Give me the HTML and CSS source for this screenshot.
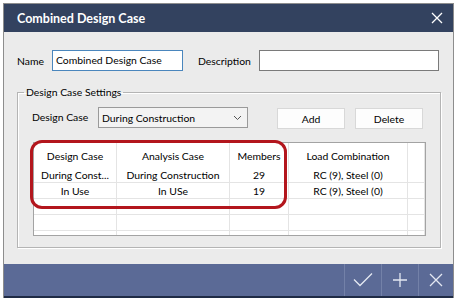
FILE: index.html
```html
<!DOCTYPE html>
<html>
<head>
<meta charset="utf-8">
<link rel="stylesheet" href="styles.css">
</head>
<body>
<div class="stage">
  <div class="window">
    <div class="titlebar">
      <span class="title">Combined Design Case</span>
      <svg class="close" width="12" height="12" viewBox="0 0 12 12"><path d="M1 1L11 11M11 1L1 11" stroke="#ffffff" stroke-width="1.3" fill="none"/></svg>
    </div>
    <div class="content">
      <div class="row-top">
        <label class="lbl-name">Name</label>
        <div class="input input-name">Combined Design Case</div>
        <label class="lbl-desc">Description</label>
        <div class="input input-desc"></div>
      </div>
      <fieldset class="group">
        <legend>Design Case Settings</legend>
        <div class="row-case">
          <label class="lbl-case">Design Case</label>
          <div class="select">
            <span>During Construction</span>
            <svg width="9" height="6" viewBox="0 0 9 6"><path d="M1 1L4.5 4.5L8 1" stroke="#555" stroke-width="1" fill="none"/></svg>
          </div>
          <button class="btn btn-add">Add</button>
          <button class="btn btn-del">Delete</button>
        </div>
        <div class="table-wrap">
          <div class="grid">
            <div class="h">Design Case</div>
            <div class="h">Analysis Case</div>
            <div class="h">Members</div>
            <div class="h">Load Combination</div>
            <div class="h"></div>

            <div class="c">During Const...</div>
            <div class="c">During Construction</div>
            <div class="c">29</div>
            <div class="c">RC (9), Steel (0)</div>
            <div class="c"></div>

            <div class="c">In Use</div>
            <div class="c">In USe</div>
            <div class="c">19</div>
            <div class="c">RC (9), Steel (0)</div>
            <div class="c"></div>

            <div class="c"></div><div class="c"></div><div class="c"></div><div class="c"></div><div class="c"></div>
            <div class="c"></div><div class="c"></div><div class="c"></div><div class="c"></div><div class="c"></div>
            <div class="c"></div><div class="c"></div><div class="c"></div><div class="c"></div><div class="c"></div>
          </div>
          <div class="highlight"></div>
        </div>
      </fieldset>
    </div>
    <div class="footer">
      <div class="fbtn"><svg width="20" height="14" viewBox="0 0 20 14"><path d="M1 6.5L7 12.5L19 0.5" stroke="#e4e8f2" stroke-width="1.3" fill="none"/></svg></div>
      <div class="fbtn"><svg width="16" height="16" viewBox="0 0 16 16"><path d="M8 1V15M1 8H15" stroke="#e4e8f2" stroke-width="1.3" fill="none"/></svg></div>
      <div class="fbtn last"><svg width="14" height="14" viewBox="0 0 14 14"><path d="M1 1L13 13M13 1L1 13" stroke="#e4e8f2" stroke-width="1.3" fill="none"/></svg></div>
    </div>
    <div class="under"></div>
  </div>
</div>
</body>
</html>
```

FILE: styles.css
```css
* { box-sizing: border-box; }
html, body { margin: 0; padding: 0; background: #ffffff; }
body {
  font-family: Lato, "Liberation Sans", sans-serif;
  font-size: 10.4px;
  color: #000;
}
.stage { padding: 3px 0 0 3px; width: 460px; height: 305px; overflow: hidden; }
.window {
  width: 451px;
  border: 1px solid #8d8d8d;
  border-bottom: none;
  background: #ebebeb;
}
.titlebar {
  height: 28px;
  background: #33425f;
  display: flex;
  align-items: center;
  justify-content: space-between;
  padding: 0 10px 0 13px;
}
.title { color: #fff; font-weight: bold; font-size: 12.5px; }
.close { display: block; }
.content {
  height: 232px;
  padding: 18px 0 0 13px;
  background: #ebebeb;
}
.row-top { display: flex; align-items: center; height: 21px; }
.lbl-name { width: 35px; }
.input {
  height: 21px;
  background: #fff;
  border: 1px solid #7a7a7a;
  padding: 0 3px;
  line-height: 19px;
  white-space: nowrap;
}
.input-name { width: 131px; border-color: #4a86bd; }
.lbl-desc { margin-left: 15px; width: 61px; }
.input-desc { width: 180px; }

.group {
  margin: 14px 0 0 0;
  width: 424px;
  border: 1px solid #b4b4b4;
  box-shadow: inset 1px 1px 0 #fff, 1px 1px 0 #fff;
  padding: 8px 0 11px 14px;
}
.group legend {
  padding: 0 2px;
  margin-left: -8px;
  line-height: 14px;
}
.row-case { display: flex; align-items: flex-start; height: 21px; }
.lbl-case { width: 66px; line-height: 21px; }
.select {
  width: 150px;
  height: 21px;
  border: 1px solid #9a9a9a;
  background: #f3f3f3;
  display: flex;
  align-items: center;
  justify-content: space-between;
  padding: 0 5px 0 3px;
}
.btn {
  font: inherit;
  color: #000;
  height: 21px;
  width: 68px;
  margin-top: 1px;
  background: #fdfdfd;
  border: 1px solid #d8d8d8;
  padding: 0;
}
.btn-add { margin-left: 29px; }
.btn-del { margin-left: 10px; }

.table-wrap {
  position: relative;
  margin: 14px 0 0 1px;
  width: 393px;
  height: 94px;
}
.grid {
  width: 393px;
  height: 94px;
  border: 1px solid #a3a3a3;
  background: #fff;
  overflow: hidden;
  display: grid;
  grid-template-columns: 83px 113px 59px 119px 17px;
  grid-template-rows: 24px repeat(5, 16px);
}
.h {
  display: flex;
  align-items: center;
  justify-content: center;
  border-right: 1px solid #e4e4e4;
  padding-top: 1px;
  white-space: nowrap;
}
.c {
  display: flex;
  align-items: center;
  justify-content: center;
  border-right: 1px solid #e4e4e4;
  border-bottom: 1px solid #e4e4e4;
  white-space: nowrap;
  overflow: hidden;
}
.highlight {
  position: absolute;
  left: -3px;
  top: -2px;
  width: 257px;
  height: 69px;
  border: 3px solid #b3161d;
  border-radius: 12px;
}

.footer {
  height: 32px;
  background: #5b6a96;
  display: flex;
  justify-content: flex-end;
}
.fbtn {
  width: 37px;
  border-left: 1px solid #7381a8;
  display: flex;
  align-items: center;
  justify-content: center;
}
.fbtn.last { width: 35px; }
.fbtn svg { display: block; }
.under { height: 2px; background: #1f2b45; }
```
